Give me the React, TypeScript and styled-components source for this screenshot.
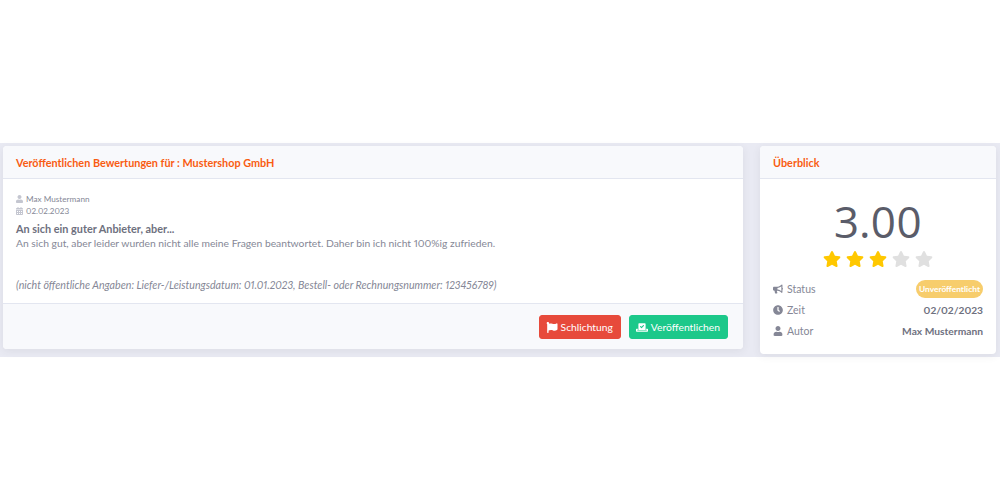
import React from 'react';
import styled, {createGlobalStyle} from 'styled-components';
import {FaBullhorn, FaCalendarAlt, FaClock, FaFlag, FaStar, FaUser, FaVoteYea} from 'react-icons/fa';

const GlobalStyle = createGlobalStyle`
    html, body {
        margin: 0;
        padding: 0;
        background: #fff;
    }

    body {
        font-family: Lato, 'Open Sans', 'Liberation Sans', sans-serif;
        font-variant-numeric: proportional-nums;
        color: #858796;
    }
`;

const stars = [true, true, true, false, false];

const overview = [
    {key: 'status', icon: <FaBullhorn />, label: 'Status', value: <Badge>Unveröffentlicht</Badge>},
    {key: 'zeit', icon: <FaClock />, label: 'Zeit', value: <Value>02/02/2023</Value>},
    {key: 'autor', icon: <FaUser />, label: 'Autor', value: <Value>Max Mustermann</Value>}
];

const App = () => {
    return (
        <Page>
            <GlobalStyle />
            <Band>
                <MainCard>
                    <CardHeader>Veröffentlichen Bewertungen für : Mustershop GmbH</CardHeader>
                    <ReviewBody>
                        <Meta>
                            <FaUser />
                            Max Mustermann
                        </Meta>
                        <Meta>
                            <FaCalendarAlt />
                            02.02.2023
                        </Meta>
                        <ReviewTitle>An sich ein guter Anbieter, aber...</ReviewTitle>
                        <ReviewText>An sich gut, aber leider wurden nicht alle meine Fragen beantwortet. Daher bin ich nicht 100%ig zufrieden.</ReviewText>
                        <ReviewNote>(nicht öffentliche Angaben: Liefer-/Leistungsdatum: 01.01.2023, Bestell- oder Rechnungsnummer: 123456789)</ReviewNote>
                    </ReviewBody>
                    <CardFooter>
                        <ActionButton $color='#e74a3b'>
                            <FaFlag />
                            Schlichtung
                        </ActionButton>
                        <ActionButton $color='#1cc88a'>
                            <FaVoteYea />
                            Veröffentlichen
                        </ActionButton>
                    </CardFooter>
                </MainCard>
                <SideCard>
                    <CardHeader>Überblick</CardHeader>
                    <OverviewBody>
                        <Score>3.00</Score>
                        <Stars>
                            {stars.map((filled, index) => (
                                <StarItem key={index} $filled={filled}>
                                    <FaStar />
                                </StarItem>
                            ))}
                        </Stars>
                        {overview.map(row => (
                            <InfoRow key={row.key}>
                                <InfoLabel>
                                    {row.icon}
                                    {row.label}
                                </InfoLabel>
                                {row.value}
                            </InfoRow>
                        ))}
                    </OverviewBody>
                </SideCard>
            </Band>
        </Page>
    );
};

export default App;

const Page = styled.div`
    width: 1000px;
    height: 500px;
    padding-top: 143px;
    box-sizing: border-box;
    overflow: hidden;
`;

const Band = styled.div`
    display: flex;
    align-items: flex-start;
    justify-content: space-between;
    height: 214px;
    padding: 3px 4px 0 3px;
    box-sizing: border-box;
    background: #e9eaf3;
`;

const Card = styled.section`
    display: flex;
    flex-direction: column;
    overflow: hidden;
    background: #fff;
    border-radius: 4px;
    box-shadow: 0 2px 8px rgba(58, 59, 69, 0.08);
`;

const MainCard = styled(Card)`
    width: 740px;
    height: 203px;
`;

const SideCard = styled(Card)`
    width: 236px;
    height: 208px;
`;

const CardHeader = styled.h2`
    flex: none;
    height: 33px;
    margin: 0;
    padding: 0 13px;
    box-sizing: border-box;
    background: #f8f9fc;
    border-bottom: 1px solid #e3e6f0;
    color: #f95c12;
    font-size: 10.85px;
    font-weight: 700;
    line-height: 33px;
`;

const ReviewBody = styled.div`
    flex: 1;
    padding: 14px 13px 0;
`;

const Meta = styled.div`
    display: flex;
    align-items: center;
    gap: 3px;
    height: 12px;
    color: #858796;
    font-size: 8.2px;
    line-height: 12px;

    svg {
        width: 7px;
        height: 8px;
        color: #c4c6d0;
    }
`;

const ReviewTitle = styled.div`
    margin-top: 4px;
    color: #6e707e;
    font-size: 10.85px;
    font-weight: 700;
    line-height: 15px;
`;

const ReviewText = styled.p`
    margin: 0;
    font-size: 10.3px;
    line-height: 15px;
`;

const ReviewNote = styled.p`
    margin: 26px 0 0;
    font-size: 10.65px;
    font-style: italic;
    line-height: 15px;
`;

const CardFooter = styled.footer`
    flex: none;
    display: flex;
    align-items: flex-start;
    justify-content: flex-end;
    gap: 8px;
    height: 46px;
    padding: 11px 15px 0 0;
    box-sizing: border-box;
    background: #f8f9fc;
    border-top: 1px solid #e3e6f0;
`;

const ActionButton = styled.button<{$color: string}>`
    display: flex;
    align-items: center;
    gap: 3px;
    height: 24px;
    padding: 0 7px 0 6px;
    background: ${props => props.$color};
    border: 1px solid ${props => props.$color};
    border-radius: 3px;
    color: #fff;
    font-family: inherit;
    font-size: 10.3px;

    svg {
        width: 12px;
        height: 11px;
    }
`;

const OverviewBody = styled.div`
    flex: 1;
    padding: 0 13px;
`;

const Score = styled.div`
    margin-top: 14px;
    color: #5a5c69;
    font-family: 'Open Sans', sans-serif;
    font-size: 44px;
    line-height: 57px;
    text-align: center;
`;

const Stars = styled.div`
    display: flex;
    justify-content: center;
    gap: 5px;
    height: 28px;
`;

const StarItem = styled.span<{$filled: boolean}>`
    display: flex;
    color: ${props => (props.$filled ? '#ffc800' : '#e0e0e0')};

    svg {
        width: 18px;
        height: 18px;
    }
`;

const InfoRow = styled.div`
    display: flex;
    align-items: center;
    justify-content: space-between;
    height: 21px;
`;

const InfoLabel = styled.div`
    display: flex;
    align-items: center;
    gap: 4px;
    font-size: 10.5px;

    svg {
        width: 10px;
        height: 10px;
        color: #858796;
    }
`;

function Badge({children}: {children: React.ReactNode}) {
    return <BadgePill>{children}</BadgePill>;
}

function Value({children}: {children: React.ReactNode}) {
    return <ValueText>{children}</ValueText>;
}

const BadgePill = styled.span`
    padding: 0 3px;
    background: #f7cd6c;
    border-radius: 9px;
    color: #fff;
    font-size: 8.4px;
    font-weight: 700;
    line-height: 18px;
`;

const ValueText = styled.span`
    color: #6e707e;
    font-size: 10.25px;
    font-weight: 700;
`;
